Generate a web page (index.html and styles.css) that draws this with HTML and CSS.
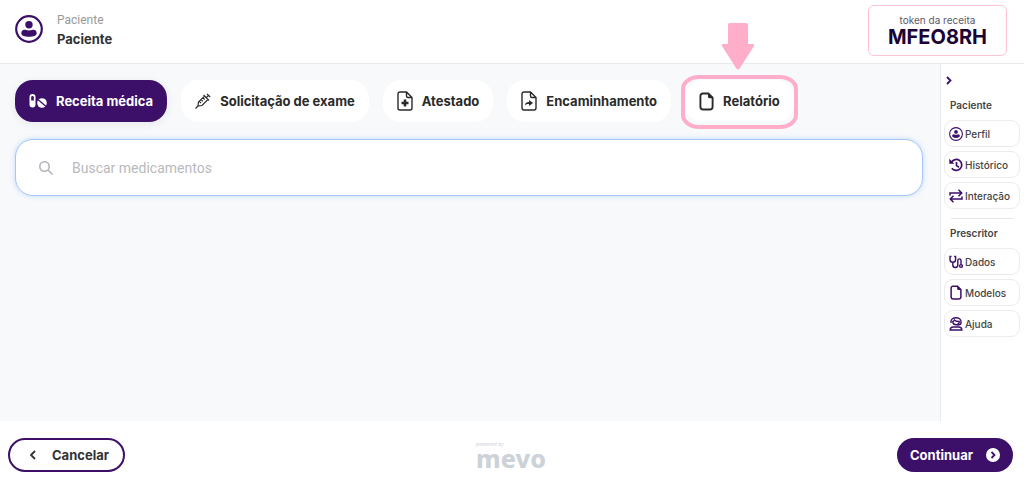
FILE: index.html
```html
<!DOCTYPE html>
<html lang="pt-BR">
<head>
    <meta charset="UTF-8">
    <meta name="viewport" content="width=device-width, initial-scale=1.0">
    <title>Receita médica - Mevo</title>
    <link rel="stylesheet" href="styles.css">
</head>
<body>
    <svg class="sprite" aria-hidden="true">
        <symbol id="icon-user" viewBox="0 0 28 28">
            <circle cx="14" cy="14" r="12.8" fill="none" stroke="currentColor" stroke-width="2.2"/>
            <circle cx="14" cy="9.8" r="3.7" fill="currentColor"/>
            <path d="M10.5 14.8c2 .9 5 .9 7 0 2.600-.5 4.200 1.100 4.200 3.400 0 2.400-3.400 3.600-7.700 3.600s-7.700-1.200-7.700-3.600c0-2.300 1.600-3.900 4.200-3.400z" fill="currentColor"/>
        </symbol>
        <symbol id="icon-file" viewBox="0 0 16 20">
            <path d="M4 1.500h6l4.500 4.500v9.500a3 3 0 0 1-3 3h-7a3 3 0 0 1-3-3v-11.500a2.500 2.500 0 0 1 2.500-2.500z" fill="none" stroke="currentColor" stroke-width="2"/>
            <path d="M9.500 1l5.500 5.500h-4a1.500 1.500 0 0 1-1.500-1.500z" fill="currentColor"/>
        </symbol>
    </svg>

    <header class="header">
        <div class="patient">
            <svg class="avatar"><use href="#icon-user"/></svg>
            <div>
                <div class="patient-label">Paciente</div>
                <div class="patient-name">Paciente</div>
            </div>
        </div>
        <div class="token">
            <span class="token-label">token da receita</span>
            <strong class="token-code">MFEO8RH</strong>
        </div>
    </header>

    <div class="main">
        <main class="content">
            <nav class="tabs">
                <button type="button" class="tab active">
                    <svg width="18" height="16" viewBox="0 0 18 16">
                        <path d="M3.500 1a3 3 0 0 1 3 3v7.500a3 3 0 0 1-6 0v-7.500a3 3 0 0 1 3-3z" fill="currentColor"/>
                        <path d="M2.200 7.500v-3.200a1.300 1.300 0 0 1 2.600 0v3.200z" fill="#3c0f69"/>
                        <circle cx="13" cy="10" r="4.800" fill="currentColor"/>
                        <path d="M9 6.500l8 7" stroke="#3c0f69" stroke-width="1.300"/>
                    </svg>
                    Receita médica
                </button>
                <button type="button" class="tab">
                    <svg width="16" height="16" viewBox="0 0 16 16" fill="none" stroke="currentColor">
                        <path d="M.5 15.500l2.500-2.500M3 13l.5-4 6-6 3.500 3.500-6 6zM8.500 2l5.500 5.500M11 4.800l2.500-2.500M12 .8l3.200 3.200M8 4.800l1.700 1.700M6.200 6.600l1.700 1.700M4.400 8.400l1.700 1.700" stroke-width="1.200"/>
                    </svg>
                    Solicitação de exame
                </button>
                <button type="button" class="tab">
                    <svg width="16" height="20" viewBox="1 0 16 20" fill="none" stroke="currentColor" stroke-width="1.400">
                        <path d="M4 1h6.500l5.500 5.500v10.500a2 2 0 0 1-2 2h-10a2 2 0 0 1-2-2v-14a2 2 0 0 1 2-2zM10.500 1v4a1.500 1.500 0 0 0 1.500 1.500h4"/>
                        <path d="M9 8.500v7M5.500 12h7" stroke-width="2.600"/>
                    </svg>
                    Atestado
                </button>
                <button type="button" class="tab">
                    <svg width="16" height="20" viewBox="1 0 16 20" fill="none" stroke="currentColor" stroke-width="1.400">
                        <path d="M4 1h6.500l5.500 5.500v10.500a2 2 0 0 1-2 2h-10a2 2 0 0 1-2-2v-14a2 2 0 0 1 2-2zM10.500 1v4a1.500 1.500 0 0 0 1.500 1.500h4"/>
                        <path d="M5 14.500c0-2.500 1.500-3.500 4-3.500v-2l4 3-4 3v-2c-2 0-3 .3-4 1.500z" fill="currentColor" stroke="none"/>
                    </svg>
                    Encaminhamento
                </button>
                <div class="tab-highlight">
                    <button type="button" class="tab">
                        <svg width="15" height="19"><use href="#icon-file"/></svg>
                        Relatório
                    </button>
                    <svg class="arrow" viewBox="0 0 32 47">
                        <path d="M8 0h16q2 0 2 2v19h5q2 0 1 2l-14 22q-2 3-4 0l-14-22q-1-2 1-2h5v-19q0-2 2-2z"/>
                    </svg>
                </div>
            </nav>
            <label class="search">
                <svg width="16" height="16" viewBox="0 0 16 16" fill="none" stroke="currentColor" stroke-width="1.600">
                    <circle cx="6.500" cy="6.500" r="4.700"/>
                    <path d="M10 10l4.500 4.500"/>
                </svg>
                <input type="text" placeholder="Buscar medicamentos" aria-label="Buscar medicamentos">
            </label>
        </main>

        <aside class="sidebar">
            <button type="button" class="collapse" aria-label="Recolher menu">
                <svg width="6" height="9" viewBox="0 0 6 9" fill="none" stroke="currentColor" stroke-width="1.800"><path d="M1 1l3.500 3.500-3.500 3.500"/></svg>
            </button>
            <h2 class="side-title">Paciente</h2>
            <div class="side-group">
                <button type="button" class="side-button">
                    <svg width="14" height="14"><use href="#icon-user"/></svg>
                    Perfil
                </button>
                <button type="button" class="side-button">
                    <svg width="14" height="14" viewBox="0 0 14 14" fill="none" stroke="currentColor" stroke-width="1.700">
                        <path d="M2.500 4.200a5.500 5.500 0 1 1 .3 6M7.500 4v3.500l2.500 1.700"/>
                        <path d="M.3.800v5h5z" fill="currentColor" stroke="none"/>
                    </svg>
                    Histórico
                </button>
                <button type="button" class="side-button">
                    <svg width="14" height="14" viewBox="0 0 14 14" fill="none" stroke="currentColor" stroke-width="1.500">
                        <path d="M1 6.500v-2.500h11.500M9.500.8l3.200 3.200-3.200 3.200M13 7.500v2.500h-11.500M4.500 6.800l-3.200 3.200 3.200 3.200"/>
                    </svg>
                    Interação
                </button>
            </div>
            <hr class="divider">
            <h2 class="side-title">Prescritor</h2>
            <div class="side-group">
                <button type="button" class="side-button">
                    <svg width="14" height="14" viewBox="0 0 14 14" fill="none" stroke="currentColor" stroke-width="1.400">
                        <path d="M2.500 1.500h-1.500v3a2.800 2.800 0 0 0 5.600 0v-3h-1.500M3.800 7.500v2.500a2.500 2.500 0 0 0 5 0v-4.500a1.600 1.600 0 0 1 3.200 0v4"/>
                        <circle cx="12" cy="11" r="1.400"/>
                    </svg>
                    Dados
                </button>
                <button type="button" class="side-button">
                    <svg width="14" height="15"><use href="#icon-file"/></svg>
                    Modelos
                </button>
                <button type="button" class="side-button">
                    <svg width="14" height="14" viewBox="0 0 14 14" fill="none" stroke="currentColor" stroke-width="1.400">
                        <path d="M3.800 4.500a3.200 3.200 0 1 0 6.400 0q-3.800 0-4.700-1.500-.5 1.300-1.700 1.500z"/>
                        <path d="M2 6v-1.500a5 3.800 0 0 1 10 0v1.500q0 2-3.800 2M1.200 13q0-3 3-3h5.600q3 0 3 3z"/>
                    </svg>
                    Ajuda
                </button>
            </div>
        </aside>
    </div>

    <footer class="footer">
        <button type="button" class="cancel">
            <svg width="8" height="10" viewBox="0 0 8 10" fill="none" stroke="currentColor" stroke-width="1.800"><path d="M6 1l-4 4 4 4"/></svg>
            Cancelar
        </button>
        <div class="logo">
            <span class="powered">powered by</span>
            <span class="brand">mevo</span>
        </div>
        <button type="button" class="continue">
            Continuar
            <svg width="14" height="14" viewBox="0 0 14 14">
                <circle cx="7" cy="7" r="7" fill="currentColor"/>
                <path d="M5.500 4l3 3-3 3" fill="none" stroke="#3c0f69" stroke-width="1.800"/>
            </svg>
        </button>
    </footer>
</body>
</html>
```

FILE: styles.css
```css
* {
    box-sizing: border-box;
}
body {
    margin: 0;
    min-height: 100vh;
    display: flex;
    flex-direction: column;
    font-family: Inter, "Liberation Sans", sans-serif;
    color: #333;
    background-color: #fff;
}
button {
    font-family: inherit;
    cursor: pointer;
}
svg {
    flex-shrink: 0;
}
.sprite {
    position: absolute;
    width: 0;
    height: 0;
}

/* Header */
.header {
    display: flex;
    justify-content: space-between;
    align-items: flex-start;
    height: 64px;
    padding: 5px 17px 0 15px;
    border-bottom: 1px solid #e9eaec;
}
.patient {
    display: flex;
    align-items: center;
    gap: 14px;
    padding-top: 5px;
}
.avatar {
    width: 28px;
    height: 28px;
    color: #3c0f69;
}
.patient-label {
    font-family: Roboto, sans-serif;
    font-size: 12px;
    line-height: 20px;
    color: #999;
}
.patient-name {
    font-size: 13px;
    line-height: 18px;
    font-weight: 700;
}
.token {
    display: flex;
    flex-direction: column;
    align-items: center;
    min-width: 139px;
    height: 51px;
    padding-top: 7px;
    border: 1px solid #ffc4d1;
    border-radius: 6px;
}
.token-label {
    font-size: 10px;
    line-height: 14px;
    color: #5c5866;
}
.token-code {
    font-size: 20px;
    line-height: 20px;
    font-weight: 700;
    color: #1b0336;
}

/* Main */
.main {
    flex: 1;
    display: flex;
}
.content {
    flex: 1;
    padding: 16px 17px 16px 15px;
    background-color: #f7f9fb;
}
.tabs {
    display: flex;
    gap: 14px;
    margin-bottom: 17px;
}
.tab {
    display: flex;
    align-items: center;
    gap: 9px;
    height: 42px;
    padding: 0 14px;
    border: none;
    border-radius: 18px;
    background-color: #fff;
    color: #2a2a2a;
    font-size: 13px;
    font-weight: 700;
    white-space: nowrap;
}
.tab.active {
    background-color: #3c0f69;
    color: #fff;
    box-shadow: 0 2px 10px rgba(60, 15, 105, 0.08);
}
.tab-highlight {
    position: relative;
}
.tab-highlight::after {
    content: "";
    position: absolute;
    inset: -5px -4px -7px;
    border: 4px solid #ffaec9;
    border-radius: 18px / 14px;
    pointer-events: none;
}
.arrow {
    position: absolute;
    left: 50%;
    bottom: 52px;
    width: 32px;
    height: 47px;
    margin-left: -17px;
    fill: #ffaec9;
}
.search {
    display: flex;
    align-items: center;
    gap: 18px;
    height: 57px;
    padding: 0 22px;
    border: 1px solid #a4c6fa;
    border-radius: 18px;
    background-color: #fff;
    box-shadow: 0 0 5px rgba(120, 170, 245, 0.4);
    color: #b0b5bc;
}
.search input {
    flex: 1;
    border: none;
    outline: none;
    padding: 0;
    font-family: Roboto, sans-serif;
    font-size: 14px;
    color: #333;
}
.search input::placeholder {
    color: #b8babd;
}

/* Sidebar */
.sidebar {
    width: 84px;
    padding: 12px 4px 0 3px;
    border-left: 1px solid #e9eaec;
}
.collapse {
    display: flex;
    margin: 0 0 13px 2px;
    padding: 0;
    border: none;
    background: none;
    color: #3c0f69;
}
.side-title {
    margin: 0 0 8px 6px;
    font-size: 10px;
    line-height: 14px;
    font-weight: 600;
    color: #444;
}
.side-group {
    display: flex;
    flex-direction: column;
    gap: 4px;
}
.side-button {
    display: flex;
    align-items: center;
    gap: 2px;
    height: 27px;
    padding: 0 4px;
    border: 1px solid #ececee;
    border-radius: 9px;
    background-color: #fff;
    color: #444;
    font-size: 10px;
    font-weight: 500;
}
.side-button svg {
    color: #3c0f69;
}
.divider {
    margin: 9px 7px 7px;
    border: none;
    border-top: 1px solid #e4e5e7;
}

/* Footer */
.footer {
    display: flex;
    justify-content: space-between;
    align-items: center;
    height: 68px;
    padding: 0 11px 0 8px;
}
.cancel,
.continue {
    display: flex;
    align-items: center;
    height: 34px;
    border: 2px solid #3c0f69;
    border-radius: 17px;
    font-size: 13px;
    font-weight: 700;
}
.cancel {
    gap: 15px;
    padding: 0 14px 0 19px;
    background-color: #fff;
    color: #333;
}
.continue {
    gap: 13px;
    padding: 0 11px;
    background-color: #3c0f69;
    color: #fff;
}
.logo {
    display: flex;
    flex-direction: column;
    color: #cdd2d8;
}
.powered {
    font-size: 5px;
    line-height: 5px;
    font-style: italic;
}
.brand {
    font-family: "Noto Sans", sans-serif;
    font-size: 25px;
    line-height: 22px;
    font-weight: 800;
}
```
